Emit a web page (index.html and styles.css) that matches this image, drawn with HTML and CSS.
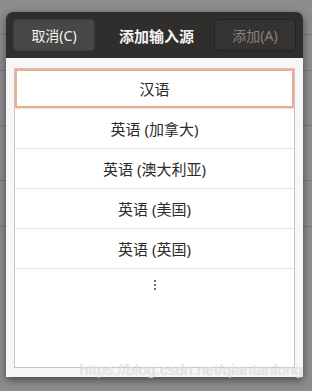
FILE: index.html
```html
<!DOCTYPE html>
<html lang="zh">
<head>
    <meta charset="UTF-8">
    <meta name="viewport" content="width=device-width, initial-scale=1.0">
    <title>添加输入源</title>
    <link rel="stylesheet" href="styles.css">
</head>
<body>
    <div class="dialog">
        <div class="header">
            <button class="btn cancel">取消(C)</button>
            <div class="title">添加输入源</div>
            <button class="btn add" disabled>添加(A)</button>
        </div>
        <div class="content">
            <div class="list">
                <div class="row selected">汉语</div>
                <div class="row">英语 (加拿大)</div>
                <div class="row">英语 (澳大利亚)</div>
                <div class="row">英语 (美国)</div>
                <div class="row">英语 (英国)</div>
                <div class="row more"><span></span><span></span><span></span></div>
            </div>
        </div>
    </div>
    <div class="watermark">https://blog.csdn.net/qiantanlong</div>
</body>
</html>
```

FILE: styles.css
```css
body {
    margin: 0;
    width: 312px;
    height: 391px;
    padding: 12px 0 0 6px;
    box-sizing: border-box;
    overflow: hidden;
    position: relative;
    font-family: "Noto Sans", "Noto Sans CJK SC", sans-serif;
    background-color: #8d8d8d;
    /* dimmed window behind the dialog */
    background-image:
        linear-gradient(#777, #777),
        linear-gradient(#7a7a7a, #7a7a7a),
        linear-gradient(#7a7a7a, #7a7a7a),
        linear-gradient(#7a7a7a, #7a7a7a),
        linear-gradient(#7a7a7a, #7a7a7a);
    background-size: 312px 1px, 312px 1px, 312px 1px, 312px 1px, 312px 1px;
    background-position: 0 34px, 0 70px, 0 125px, 0 180px, 0 226px;
    background-repeat: no-repeat;
}

.dialog {
    width: 297px;
    height: 365px;
    display: flex;
    flex-direction: column;
    border-radius: 7px 7px 0 0;
    box-shadow: 0 3px 8px rgba(0, 0, 0, 0.5);
    overflow: hidden;
}

.header {
    height: 46px;
    background-color: #302e2d;
    display: flex;
    align-items: center;
    justify-content: space-between;
    padding: 0 7px;
    box-sizing: border-box;
    flex-shrink: 0;
}

.btn {
    width: 82px;
    height: 32px;
    border-radius: 4px;
    font-family: inherit;
    font-size: 14px;
    padding: 0;
}

.cancel {
    background-color: #494745;
    border: 1px solid #3c3a38;
    color: #f2f2f2;
}

.add {
    background-color: #353331;
    border: 1px solid #252423;
    color: #86827f;
}

.title {
    color: #f4f4f4;
    font-size: 15px;
    font-weight: bold;
    margin-left: 4px;
}

.content {
    flex: 1;
    background-color: #f6f6f6;
    padding: 10px 8px 9px 8px;
    display: flex;
}

.list {
    flex: 1;
    background-color: #fff;
    border: 1px solid #c6c6c6;
}

.row {
    height: 39px;
    border-bottom: 1px solid #e2e2e2;
    display: flex;
    align-items: center;
    justify-content: center;
    font-size: 15px;
    color: #2c2c2c;
}

.selected {
    box-shadow: inset 0 0 0 2px #f2aa8f;
}

.more {
    border-bottom: none;
    flex-direction: column;
    justify-content: flex-start;
    gap: 2px;
    padding-top: 11px;
    box-sizing: border-box;
}

.more span {
    width: 2px;
    height: 2px;
    background-color: #6e6e6e;
}

.watermark {
    position: absolute;
    right: 9px;
    bottom: 12px;
    font-family: "Liberation Sans", sans-serif;
    font-size: 15.5px;
    color: rgba(255, 255, 255, 0.55);
    text-shadow: 0 0 1px rgba(150, 150, 150, 0.6);
}
```
